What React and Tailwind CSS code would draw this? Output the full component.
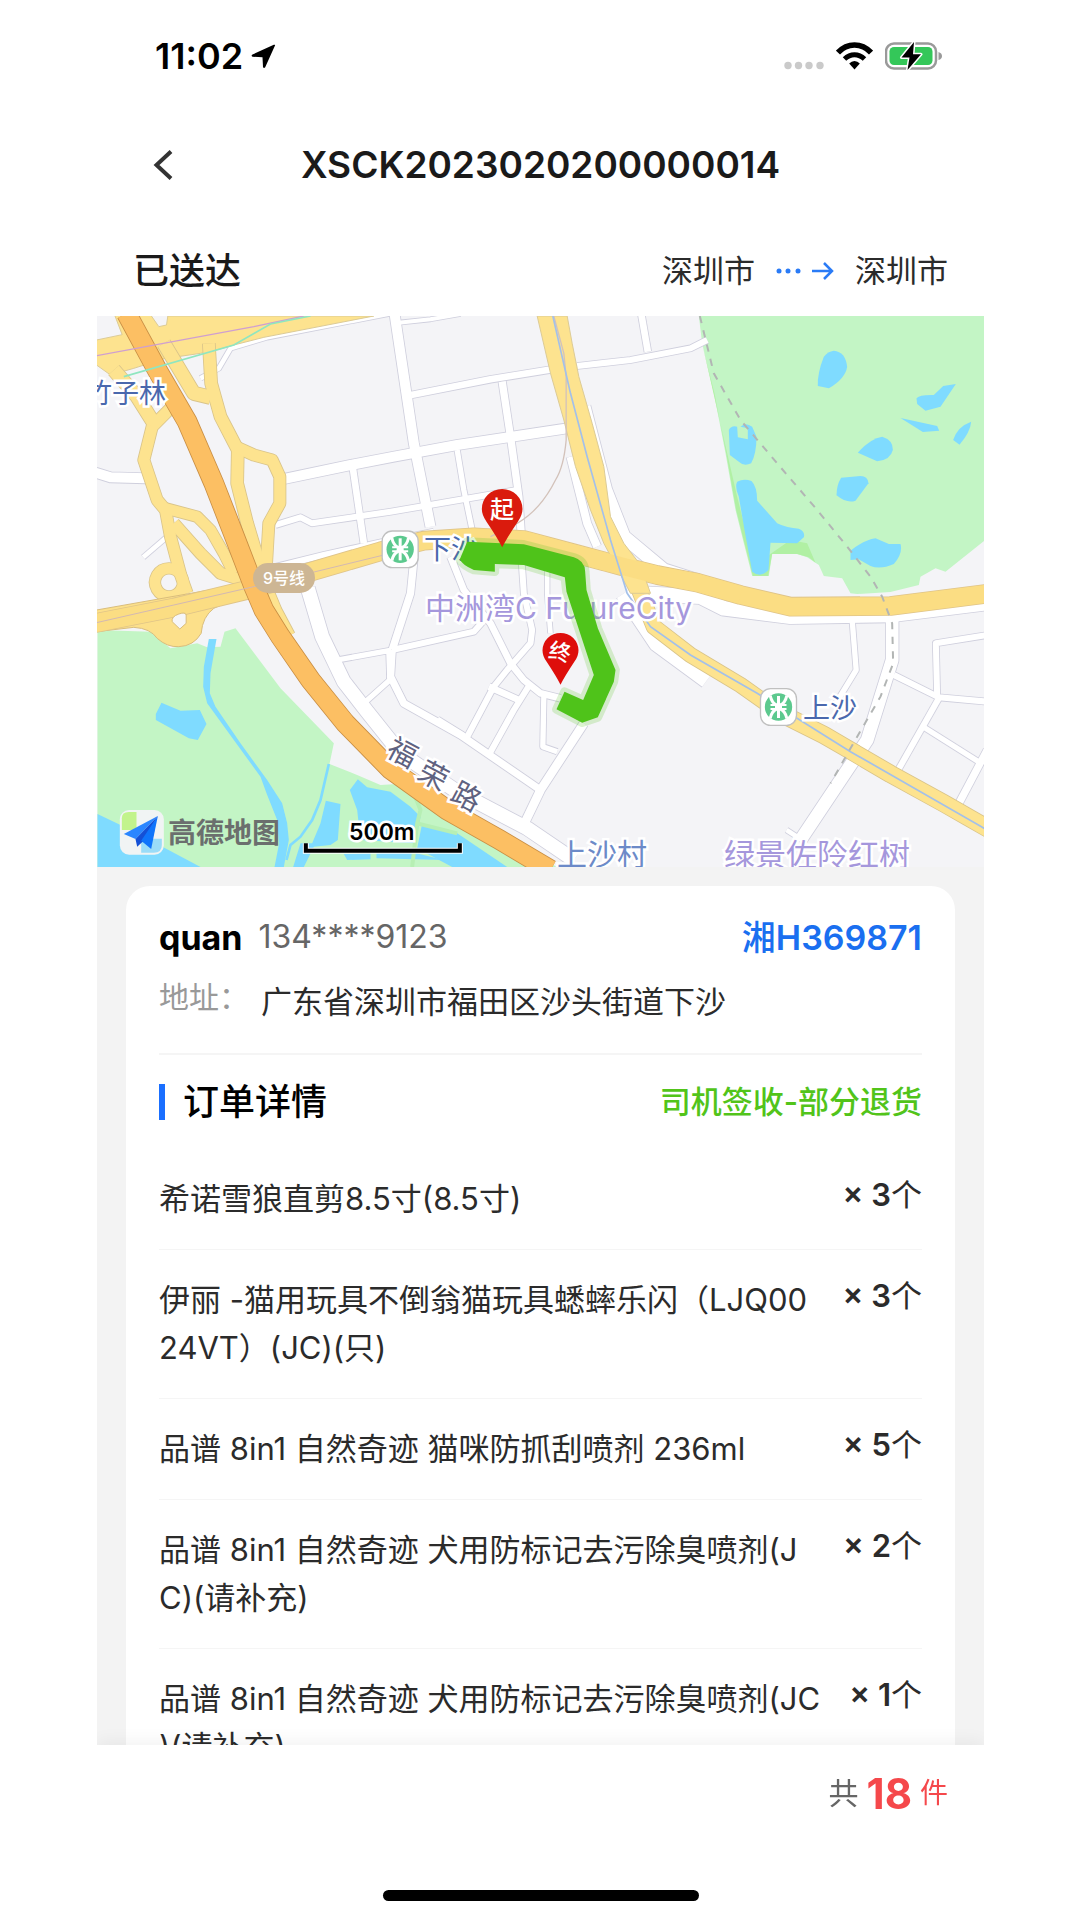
import React from 'react'

const items = [
  { name: '希诺雪狼直剪8.5寸(8.5寸)', qty: 3 },
  { name: '伊丽 -猫用玩具不倒翁猫玩具蟋蟀乐闪（LJQ0024VT）(JC)(只)', qty: 3 },
  { name: '品谱 8in1 自然奇迹 猫咪防抓刮喷剂 236ml', qty: 5 },
  { name: '品谱 8in1 自然奇迹 犬用防标记去污除臭喷剂(JC)(请补充)', qty: 2 },
  { name: '品谱 8in1 自然奇迹 犬用防标记去污除臭喷剂(JC)(请补充)', qty: 1 },
]

const parks = [
  'M1825 18H2682V692L2565 785L2535 775L2490 800L2485 825L2400 846L2300 852L2280 850L2255 805L2200 798L2185 765L2150 742L2120 732L2045 732L2035 798L1985 798L1960 700L1935 600L1905 430L1870 250L1835 100Z',
  'M21 960L180 965L240 1015L320 1000L350 1012L390 1010L402 965L435 955L570 1135L730 1300L717 1362L800 1395L870 1425L920 1422L1000 1470L1400 1671H21Z',
]

// darker edge of the reserve
const parkEdges = [
  'M1837 110L1872 250L1907 430L1937 600L1962 700L1987 798L2033 798L2045 732L2120 732L2155 742L2175 758L2150 700L2100 690L2000 760L1960 640L1940 560Z',
]

const lakes = [
  'M2230 122Q2265 125 2270 170Q2265 205 2215 235L2182 228Q2180 190 2200 140Q2212 124 2230 122Z',
  'M2478 265Q2485 254 2530 255L2558 228L2596 222L2550 290L2505 302L2480 282Z',
  'M2430 324L2540 348L2546 362L2497 366Z',
  'M2588 390Q2600 350 2642 335Q2640 365 2607 404Z',
  'M2302 428Q2340 385 2375 380Q2408 390 2407 420Q2400 450 2360 454Z',
  'M2252 503L2310 498Q2332 498 2334 520L2295 572Q2270 582 2238 556Q2238 525 2252 503Z',
  'M2280 722Q2320 690 2355 685L2395 702L2430 702Q2438 730 2410 762Q2370 780 2340 768L2305 748L2280 750Z',
  'M1915 360Q1922 346 1940 350L1942 382L1972 388L1972 355L1950 350Q1965 335 1985 350L1998 380Q1998 430 1982 460Q1960 470 1945 455L1918 435Z',
  'M1940 515Q1960 505 1983 513Q2000 530 2000 572L2060 640Q2090 655 2125 656Q2145 665 2140 682L2120 700L2040 698L2034 780Q2010 805 1985 785L1962 660L1945 560Q1932 530 1940 515Z',
  'M196 1212L213 1178L270 1202L328 1200L348 1242L322 1290L295 1285L196 1230Z',
  'M21 1512L90 1545L230 1618L330 1671H21Z',
  'M355 987H378L360 1090L358 1150L375 1190L450 1300L530 1410L575 1480L590 1540L595 1590L580 1671H552L566 1600L560 1530L528 1450L510 1400L430 1290L350 1180L338 1130L340 1070Z',
  'M706 1472L750 1482L742 1590L720 1605L670 1610L640 1671H608L630 1600L665 1600L690 1540Z',
  'M778 1440L802 1408L830 1432L900 1445L960 1490L990 1520L975 1600L810 1590L800 1500Z',
  'M760 1632L840 1630V1648L770 1650Z',
  'M995 1540L1100 1570L1250 1671H1085L980 1615Z',
  'M858 1630L960 1625L1060 1650L858 1645Z',
]

const streets = [
  ['M15 488L60 502L165 505', 30],
  ['M575 508L780 465L910 440L1100 405L1430 355', 30],
  ['M785 460L820 700', 20],
  ['M555 645L630 622L665 640L900 605L1280 540', 18],
  ['M550 772L700 735L880 695L1030 665', 18],
  ['M158 742L230 680', 14],
  ['M330 205L385 175L420 115L530 82L900 10', 14],
  ['M912 10L970 400L1020 650', 30],
  ['M962 255L1200 208L1385 178', 20],
  ['M1235 215L1260 380L1285 560L1292 670', 22],
  ['M1100 420L1120 540L1145 660', 16],
  ['M1460 168L1620 150L1800 115L1850 90', 18],
  ['M1652 10L1672 125', 20],
  ['M925 38L1020 28L1110 12', 12],
  ['M1480 290L1545 540L1600 680L1720 780L1830 815', 40],
  ['M1440 440L1490 640L1520 710', 24],
  ['M975 700L960 850L905 1020', 22],
  ['M905 1020L1150 965L1190 920', 18],
  ['M1080 740L1120 840L1200 940L1260 1060L1300 1110L1350 1150L1410 1165', 20],
  ['M1290 700L1300 850L1325 960L1320 1000L1250 1080L1210 1130L1125 1290', 18],
  ['M1370 760L1370 850L1380 970', 14],
  ['M1320 1120L1270 1200L1195 1335', 18],
  ['M1195 1130L1285 1170', 20],
  ['M1360 1160L1357 1310L1400 1325', 16],
  ['M1480 1240L1350 1440L1302 1540', 26],
  ['M905 1020L900 1100L940 1180L1110 1275L1350 1440', 22],
  ['M740 1050L895 1022L898 1110L820 1180', 16],
  ['M652 835L695 980L760 1115L830 1205L930 1330L1100 1445L1310 1555L1450 1650', 42],
  ['M1040 1230L1120 1280', 22],
  ['M1600 850L1700 1000L1850 1110', 50],
  ['M1640 850L1830 860L1900 895L2100 920L2400 915L2682 880', 44],
  ['M2285 930L2297 1080L2230 1190', 16],
  ['M2405 900L2405 1050L2330 1290L2270 1380L2130 1590', 38],
  ['M2138 1592L2088 1560', 14],
  ['M2410 1095L2545 1162L2690 1175', 18],
  ['M2540 1160L2536 1000L2690 975', 18],
  ['M2545 1165L2420 1385', 18],
  ['M2500 1252L2675 1362', 16],
  ['M2690 1320L2600 1490', 22],
]

const yellowRoads = [
  ['M250 285L185 350L160 450L200 570L225 600L240 680L272 800L290 850', 34],
  ['M70 180L140 260L190 340', 40],
  ['M220 100L310 250L360 262', 40],
  ['M355 100L362 220L390 320L442 420L440 520L470 640L500 740L500 810', 36],
  ['M440 412L490 435L545 450L568 500L568 580L535 640L528 760L500 830', 34],
  ['M225 595L320 620L360 660L400 730L430 790', 32],
  ['M250 640L330 730L390 790L470 815', 34],
  ['M235 775A42 42 0 1 0 236 775Z', 32],
  ['M535 840L560 900L600 975', 26],
  ['M1630 800L1690 950L1800 1035L1950 1125L2070 1210', 44],
  ['M2050 1200L2200 1275L2260 1310L2400 1392L2560 1480L2700 1560', 50],
]

const yellowMain = [
  ['M10 940L250 893L490 835L870 724L1000 692L1150 682L1300 690L1450 730L1600 770L1700 795L1820 818L1950 855L2100 890L2400 888L2700 850', 54],
]

const highway = 'M108 10L200 180L290 335L370 520L440 700L490 830L520 900L570 980L660 1110L765 1240L900 1378L1070 1500L1225 1588L1380 1680'
const rail = 'M1828 18L1870 190L1950 330L2060 460L2180 600L2270 710L2340 800L2375 860L2405 940L2408 1060L2370 1160L2300 1280L2220 1420'

function Roads({ list, fill, edge }) {
  return (
    <g fill="none" strokeLinejoin="round">
      {list.map(([d, w]) => <path key={d} d={d} stroke={edge} strokeWidth={w + 5} />)}
      {list.map(([d, w]) => <path key={d} d={d} stroke={fill} strokeWidth={w} />)}
    </g>
  )
}

function MetroSign({ x, y }) {
  return (
    <g transform={`translate(${x} ${y})`}>
      <rect x="-54" y="-55" width="108" height="110" rx="30" fill="#fff" stroke="#c0c0c0" strokeWidth="4" />
      <circle r="41" fill="#5cc98e" />
      <g fill="none" stroke="#fff" strokeWidth="9">
        <path d="M0 -33V33" />
        <path d="M-25 -34Q-20 -12 -6 -6V6Q-20 12 -25 34" />
        <path d="M25 -34Q20 -12 6 -6V6Q20 12 25 34" />
        <path d="M-24 -6H24M-24 6H24" strokeWidth="6" />
      </g>
    </g>
  )
}

function MapBase() {
  return (
    <svg viewBox="18 18 2664 1653" preserveAspectRatio="xMidYMid slice" className="absolute inset-0 h-full w-full" aria-hidden="true">
      <rect x="0" y="0" width="2700" height="1700" fill="#f4f4f7" />
      {parks.map(d => <path key={d} d={d} fill="#c3f5c5" />)}
      {parkEdges.map(d => <path key={d} d={d} fill="#b1f0a4" />)}
      {lakes.map(d => <path key={d} d={d} fill="#7fdbff" />)}
      <path d="M715 1362L690 1470L665 1530L630 1580L600 1605L588 1650" fill="none" stroke="#7fdbff" strokeWidth="8" />
      <path d="M960 1425L990 1500L980 1540L965 1671M980 1540L1100 1570" fill="none" stroke="#b7efb4" strokeWidth="12" />
      <Roads list={streets} fill="#ffffff" edge="#cfcfdd" />
      <path d="M18 90L95 74L72 14H180L205 50L228 45L232 18H850L520 82L430 105L385 118L330 130L262 140L240 140L130 175L60 195L18 165Z" fill="#fde38f" stroke="#dccb96" strokeWidth="3" />
      <Roads list={yellowRoads} fill="#fde38f" edge="#d9c48a" />
      <path d="M18 965L130 952Q180 955 200 985Q230 1012 265 1010Q310 1008 332 970Q336 920 370 895L470 850L470 820L18 900Z" fill="#fce08a" stroke="#d9bd7c" strokeWidth="3" />
      <Roads list={yellowMain} fill="#fbdd83" edge="#dfc489" />
      <path d="M1340 18H1430L1445 100L1465 200L1505 340L1540 470L1560 620L1600 700L1650 765L1680 850L1620 850L1540 700L1500 600L1455 470L1420 330L1380 190Z" fill="#fde38f" stroke="#dccb96" strokeWidth="3" />
      <path d="M1300 690L1450 730L1600 770L1700 795L1820 818L1950 855" fill="none" stroke="#fbdd83" strokeWidth="52" />
      <path d="M265 912Q285 905 287 915V940L268 957L245 935Q242 920 265 912Z" fill="#f6f6f8" stroke="#d9bd7c" strokeWidth="3" />
      <path d={highway} fill="none" stroke="#c98f45" strokeWidth="62" />
      <path d={highway} fill="none" stroke="#fcbf63" strokeWidth="57" />
      <g fill="none" strokeWidth="3">
        <path d="M18 137L490 50L640 18" stroke="#cf9fd0" strokeWidth="4" />
        <path d="M100 200L430 105L540 42L660 18" stroke="#8fe6c0" strokeWidth="5" />
        <path d="M18 938L250 885L490 830L880 735" stroke="#d3b9b2" />
        <path d="M1390 18L1420 130L1427 200V390Q1420 470 1395 510Q1350 600 1280 640L1200 680" stroke="#d3c2ba" strokeWidth="4" />
        <path d="M1387 18L1440 250L1490 440L1560 690L1610 850L1680 950L1800 1035L2000 1150L2280 1325L2690 1560" stroke="#a3c0ea" strokeWidth="5" />
        <path d={rail} stroke="#b2b5b4" strokeWidth="6" strokeDasharray="22 22" />
      </g>
      <MetroSign x={929} y={718} />
      <MetroSign x={2064} y={1191} />
    </svg>
  )
}

function MapRoute() {
  const route = 'M1130 695L1300 703L1450 742Q1483 752 1484 785L1488 840L1522 955L1575 1080L1570 1115L1522 1222L1475 1238L1398 1198L1422 1145L1478 1170L1510 1095L1428 845L1423 802L1300 765L1213 762V785L1150 780Q1115 765 1108 748Z'
  return (
    <svg viewBox="18 18 2664 1653" preserveAspectRatio="xMidYMid slice" className="absolute inset-0 h-full w-full" aria-hidden="true">
      <path d={route} fill="none" stroke="#4fc31a" strokeOpacity="0.2" strokeWidth="26" strokeLinejoin="round" />
      <path d={route} fill="#4fc31a" />
      <path d="M1235 712Q1222 685 1188 635Q1174 615 1174 597A61 60 0 0 1 1296 597Q1296 615 1282 635Q1248 685 1235 712Z" fill="#da1b0d" />
      <path d="M1410 1124Q1398 1100 1369 1056Q1356 1040 1356 1021A54 52 0 0 1 1464 1021Q1464 1040 1451 1056Q1422 1100 1410 1124Z" fill="#de0e0b" />
      {/* scale bar */}
      <path d="M646 1600V1622H1108V1600" fill="none" stroke="#fff" strokeWidth="18" />
      <path d="M646 1600V1622H1108V1600" fill="none" stroke="#000" strokeWidth="12" />
      {/* map vendor mark */}
      <g>
        <rect x="88" y="1500" width="132" height="134" rx="28" fill="#f1f4f4" />
        <path d="M94 1560V1525Q94 1506 115 1506H138V1560Z" fill="#c2f38c" />
        <path d="M152 1586H214V1605Q214 1628 190 1628H152Z" fill="#9adcf8" />
        <path d="M202 1518L100 1572L135 1587Z" fill="#2a86ff" />
        <path d="M202 1518L135 1587L140 1610L158 1594Z" fill="#1450d6" />
        <path d="M202 1518L152 1592L182 1617Z" fill="#0f74fb" />
      </g>
    </svg>
  )
}

function DeliveryMap() {
  const halo = '[-webkit-text-stroke:5px_#ffffff] [paint-order:stroke_fill]'
  return (
    <section aria-label="配送地图" className="relative h-[551px] shrink-0 overflow-hidden bg-[#f4f4f7] leading-none whitespace-nowrap">
      <MapBase />
      <span className={`absolute -left-3 top-16 text-[27px] text-[#4a68ad] ${halo}`}>竹子林</span>
      <span className="absolute left-[156px] top-[247px] flex h-[30px] items-center rounded-2xl bg-[#cdb694] px-2.5 text-[16px] font-medium text-white">9号线</span>
      <span className={`absolute left-[327px] top-[220px] text-[27px] text-[#4a68ad] ${halo}`}>下沙</span>
      <span className={`absolute left-[328px] top-[277px] text-[30px] text-[#a597dc] ${halo}`}>中洲湾C FutureCity</span>
      <span className={`absolute left-[706px] top-[379px] text-[27px] text-[#4a68ad] ${halo}`}>上沙</span>
      <span className={`absolute left-[460px] top-[523px] text-[30px] text-[#6c8ac8] ${halo}`}>上沙村</span>
      <span className={`absolute left-[627px] top-[523px] text-[31px] text-[#a597dc] ${halo}`}>绿景佐阾红树</span>
      <span className={`absolute left-[291px] top-[422px] rotate-[28deg] text-[29px] text-[#5f6280] ${halo}`}>福</span>
      <span className={`absolute left-[322px] top-[445px] rotate-[28deg] text-[29px] text-[#5f6280] ${halo}`}>荣</span>
      <span className={`absolute left-[355px] top-[466px] rotate-[28deg] text-[29px] text-[#5f6280] ${halo}`}>路</span>
      <MapRoute />
      <span className="absolute left-[393px] top-[182px] text-[24px] font-medium text-white">起</span>
      <span className="absolute left-[452px] top-[325px] rotate-12 text-[22px] font-medium text-white">终</span>
      <span className="absolute left-[71px] top-[503px] text-[28px] font-bold text-[#6b6f6e]">高德地图</span>
      <span className={`absolute left-[252px] top-[505px] text-[23px] font-semibold text-black ${halo}`}>500m</span>
    </section>
  )
}

function StatusBar() {
  return (
    <div className="flex h-28 shrink-0 items-center justify-between pl-[58px] pr-[42px]">
      <div className="flex items-center gap-2">
        <span className="text-[36px] font-semibold text-black">11:02</span>
        <svg width="25" height="25" viewBox="0 0 25 25" aria-hidden="true">
          <path d="M24 1.5Q24.500 .3 22.800 .8L1.500 10.500Q-.3 11.800 1.600 12.800L11.500 13.300L12 23Q12.800 25 14.200 23.300Z" fill="#000" />
        </svg>
      </div>
      <div className="flex items-center gap-3">
        <svg width="40" height="28" viewBox="0 0 40 28" fill="#cacaca" aria-hidden="true">
          <circle cx="4" cy="23.500" r="3.700" />
          <circle cx="14.500" cy="23.500" r="3.700" />
          <circle cx="25" cy="23.500" r="3.700" />
          <circle cx="36" cy="23.500" r="3.700" />
        </svg>
        <svg width="37" height="28" viewBox="0 0 37 28" fill="none" stroke="#000" aria-hidden="true">
          <path d="M2 10.500Q9 3 18.500 3T35 10.500" strokeWidth="5.500" />
          <path d="M8.500 17Q13 12.700 18.500 12.700T28.500 17" strokeWidth="5" />
          <path d="M18.500 19Q21.500 19 23.800 21.500L18.500 27.500L13.200 21.500Q15.500 19 18.500 19Z" fill="#000" stroke="none" />
        </svg>
        <svg width="57" height="28" viewBox="0 0 57 28" aria-hidden="true">
          <rect x="1" y="1.500" width="50" height="25" rx="8" fill="#fff" stroke="#9a9a9a" strokeWidth="2.500" />
          <rect x="4.500" y="5" width="43" height="18" rx="4.500" fill="#34c759" />
          <path d="M53.500 10Q57 11 57 14T53.500 18Z" fill="#9a9a9a" />
          <path d="M29 0L16.500 15.500H24.500L22.500 28L36 12.300H28Z" fill="#000" stroke="#fff" strokeWidth="3" paintOrder="stroke" strokeLinejoin="round" />
        </svg>
      </div>
    </div>
  )
}

function OrderItem({ item }) {
  return (
    <li className="flex items-start gap-7 border-b border-[#f5f5f5] py-[26px] last:border-0">
      <span className="flex-1 text-[31px] leading-[48px] [line-break:anywhere] text-[#2b2b2b]">{item.name}</span>
      <span className="text-[31px] leading-10 font-semibold whitespace-nowrap text-[#2b2b2b]">
        × {item.qty}<span className="font-normal">个</span>
      </span>
    </li>
  )
}

export default function App() {
  const total = 18
  return (
    <div className="flex h-screen flex-col overflow-hidden bg-white pl-[97px] pr-24 font-['Inter','Noto_Sans_CJK_SC',sans-serif] text-[#1a1a1a]">
      <StatusBar />

      <header className="grid h-[106px] shrink-0 grid-cols-[80px_1fr_80px] items-center">
        <button type="button" aria-label="返回" className="flex h-16 items-center pl-14">
          <svg width="20" height="30" viewBox="0 0 20 30" fill="none" stroke="#333" strokeWidth="4" aria-hidden="true">
            <path d="M18 1.500L3.500 15L18 28.500" />
          </svg>
        </button>
        <h1 className="text-center text-[37px] font-semibold whitespace-nowrap">XSCK2023020200000014</h1>
      </header>

      <div className="flex h-[98px] shrink-0 items-center justify-between px-9 pt-2">
        <strong className="text-[36px] font-medium">已送达</strong>
        <div className="flex items-center gap-5 text-[31px] text-[#2b2b2b]">
          <span>深圳市</span>
          <svg width="60" height="24" viewBox="0 0 60 24" fill="none" stroke="#2a7bf6" strokeWidth="2.500" aria-hidden="true">
            <g fill="#2a7bf6" stroke="none">
              <circle cx="4" cy="12" r="2.500" />
              <circle cx="13" cy="12" r="2.500" />
              <circle cx="23" cy="12" r="2.500" />
            </g>
            <path d="M37 12H57M49 4L57 12L49 20" />
          </svg>
          <span>深圳市</span>
        </div>
      </div>

      <main className="min-h-0 flex-1 overflow-y-auto bg-[#f3f3f3] [scrollbar-width:none]">
        <DeliveryMap />

        <article className="mx-[29px] mt-[19px] rounded-3xl bg-white px-[33px] pt-[27px]">
          <div className="flex h-12 items-center justify-between">
            <div className="flex items-center gap-4">
              <strong className="text-[34px] font-bold text-black">quan</strong>
              <a href="tel:134****9123" className="text-[32px] text-[#666666]">134****9123</a>
            </div>
            <span className="text-[34px] font-semibold text-[#1a6ff0]"><span className="font-medium">湘</span>H369871</span>
          </div>
          <div className="mt-4 flex h-12 items-start gap-3 text-[31px]">
            <span className="text-[30px] leading-10 text-[#999999]">地址：</span>
            <span className="leading-[50px] text-[#2b2b2b]">广东省深圳市福田区沙头街道下沙</span>
          </div>

          <div className="mt-7 flex h-24 items-center justify-between border-t-2 border-[#f5f5f5]">
            <h2 className="flex items-center gap-[18px] text-[36px] font-medium text-black">
              <span className="h-9 w-[6px] bg-[#1a6fff]" />
              订单详情
            </h2>
            <span className="text-[31px] font-medium text-[#52c41a]">司机签收-部分退货</span>
          </div>

          <ul>
            {items.map((item, i) => <OrderItem key={i} item={item} />)}
          </ul>
        </article>
      </main>

      <footer className="relative h-[175px] shrink-0 bg-white shadow-[0_-4px_16px_rgba(0,0,0,0.05)] [clip-path:inset(-20px_0_0_0)]">
        <p className="flex h-24 items-center justify-end gap-2 px-9 text-[30px] text-[#666666]">
          共 <strong className="text-[42px] font-bold text-[#f5484b]">{total}</strong>
          <span className="text-[28px] text-[#f5484b]">件</span>
        </p>
        <div className="mx-auto mt-[49px] h-[11px] w-[316px] rounded-full bg-black" />
      </footer>
    </div>
  )
}
